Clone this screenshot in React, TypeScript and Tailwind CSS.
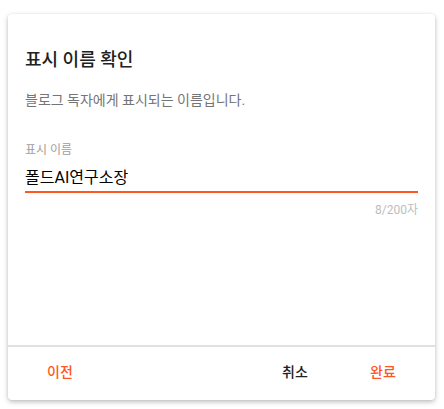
export default function App() {
  return (
    <div
      className="min-h-screen bg-white pt-[14px] px-[8px]"
      style={{ fontFamily: 'Roboto, "Noto Sans CJK KR", sans-serif' }}
    >
      <div className="w-[427px] h-[386px] bg-white rounded-[4px] shadow-[0_2px_5px_rgba(0,0,0,0.25),0_0_2px_rgba(0,0,0,0.08)] flex flex-col">
        {/* Body */}
        <div className="flex-1 px-[17px] pt-[34px]">
          <h2 className="text-[18px] leading-[24px] font-medium text-[#212121]">표시 이름 확인</h2>
          <p className="mt-[18px] text-[14px] leading-[20px] text-[#757575]">
            블로그 독자에게 표시되는 이름입니다.
          </p>
          <div className="mt-[32px]">
            <label className="block text-[12px] leading-[16px] text-[#9e9e9e]">표시 이름</label>
            <div className="mt-[9px] pb-[2px] border-b-2 border-[#ff5722] text-[16px] leading-[22px] text-black">
              폴드AI연구소장
            </div>
            <div className="mt-[9px] text-right text-[12px] leading-[16px] text-[#bdbdbd]">8/200자</div>
          </div>
        </div>
        {/* Footer */}
        <div className="border-t-2 border-[#e0e0e0] h-[55px] flex items-center px-[20px] pb-[2px]">
          <button className="w-16 h-9 text-[14px] font-medium text-[#ff5722]">이전</button>
          <div className="flex-1" />
          <button className="w-16 h-9 text-[14px] font-medium text-[#212121]">취소</button>
          <button className="ml-[24px] w-16 h-9 text-[14px] font-medium text-[#ff5722]">완료</button>
        </div>
      </div>
    </div>
  )
}
